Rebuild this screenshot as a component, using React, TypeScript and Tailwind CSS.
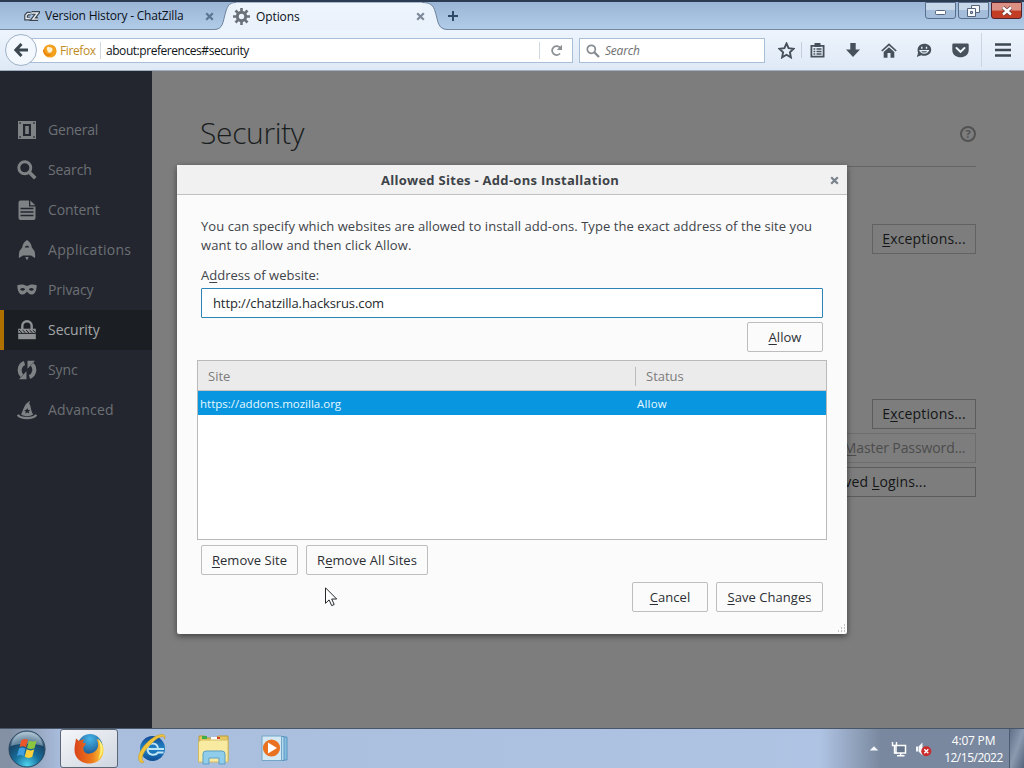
import { type ReactNode } from "react";
import clsx from "clsx";

interface CategoryProps {
  label: string;
  icon: ReactNode;
  selected?: boolean;
  textClass: string;
}

function Category({ label, icon, selected, textClass }: CategoryProps) {
  return (
    <li
      className={clsx(
        "flex h-10 items-center border-l-4 pl-[13px]",
        selected
          ? "border-[#b07000] bg-[#1b1f24] text-[#a3a6a8]"
          : "border-transparent text-[#6c7074]",
      )}
    >
      <svg width="20" height="20" viewBox="0 0 20 20" className={selected ? "text-[#8f9193]" : "text-[#7f8284]"}>
        {icon}
      </svg>
      <span className={clsx("ml-[11px] whitespace-nowrap text-[14px] leading-5", textClass)}>{label}</span>
    </li>
  );
}

interface ButtonProps {
  children: ReactNode;
  className?: string;
}

function DialogButton({ children, className }: ButtonProps) {
  return (
    <button
      type="button"
      className={clsx(
        "h-[30px] shrink-0 whitespace-nowrap rounded-[2px] border border-[#bdbdbd] bg-[#fbfbfb] text-[13px] leading-5 tracking-[0.05px] text-[#2b2f33]",
        className,
      )}
    >
      {children}
    </button>
  );
}

function PageButton({ children, className }: ButtonProps) {
  return (
    <button
      type="button"
      className={clsx(
        "flex h-[30px] shrink-0 items-center justify-center whitespace-nowrap border text-[14px] leading-5",
        className,
      )}
    >
      {children}
    </button>
  );
}

/** Access key underline. */
function Key({ children }: { children: string }) {
  return <span className="underline decoration-1 underline-offset-2">{children}</span>;
}

function CloseGlyph({ className }: { className?: string }) {
  return (
    <svg width="9" height="9" viewBox="0 0 9 9" className={clsx("z-10 shrink-0", className)}>
      <path d="M1.2 1.2 7.8 7.8M7.8 1.2 1.2 7.8" stroke="currentColor" strokeWidth="2.2" />
    </svg>
  );
}

const categories: CategoryProps[] = [
  {
    label: "General",
    textClass: "tracking-[-0.2px]",
    icon: (
      <>
        <path
          fillRule="evenodd"
          fill="currentColor"
          d="M1 1h18v18H1zM6 4v12h8V4zM2.300 2.300v1.500h1.500V2.300zM16.200 2.300v1.500h1.500V2.300zM2.300 16.200v1.500h1.500v-1.500zM16.200 16.200v1.500h1.500v-1.500z"
        />
        <path fill="currentColor" d="M8.200 6h3.600v8H8.200z" />
      </>
    ),
  },
  {
    label: "Search",
    textClass: "tracking-[-0.1px]",
    icon: (
      <>
        <circle cx="7.800" cy="7.800" r="6" fill="none" stroke="currentColor" strokeWidth="2.900" />
        <path d="m12.300 12.300 6 6" stroke="currentColor" strokeWidth="3.600" />
      </>
    ),
  },
  {
    label: "Content",
    textClass: "tracking-[-0.1px]",
    icon: (
      <>
        <path fill="currentColor" d="M3.500.5H12v6h6.500v11.500q0 2-2 2h-13q-2 0-2-2v-15.500q0-2 2-2zM13.300.5l5 4.800h-5z" />
        <path d="M3.500 8.500h13M3.500 12h13M3.500 15.500h13" stroke="#23262f" strokeWidth="1.300" />
      </>
    ),
  },
  {
    label: "Applications",
    textClass: "tracking-[0.3px]",
    icon: (
      <>
        <path
          fill="currentColor"
          d="M10 0c3 1.700 4.400 4.200 4.800 7.500L17.500 11q1 3.500.5 7l-4-2.500H6L2 18q-.5-3.500.5-7l2.700-3.500C5.600 4.200 7 1.700 10 0z"
        />
        <path d="M8.300 17h3.400L10 20.500z" fill="currentColor" />
        <path d="M7.800 7.500C8 5 12 5 12.200 7.500z" fill="#23262f" />
      </>
    ),
  },
  {
    label: "Privacy",
    textClass: "tracking-[-0.1px]",
    icon: (
      <path
        fillRule="evenodd"
        fill="currentColor"
        d="M.3 5.200C4 3.800 7.500 4.500 10 6c2.500-1.500 6-2.200 9.700-.8-.1 5.800-2 9.300-5.300 9.300-2 0-3.400-1.500-4.400-3-1 1.500-2.400 3-4.400 3-3.300 0-5.200-3.500-5.300-9.300zM3 9.300q2.700 3 5.200 0Q5.500 6.800 3 9.300zM11.800 9.300q2.500 3 5.200 0-2.700-2.500-5.200 0z"
      />
    ),
  },
  {
    label: "Security",
    selected: true,
    textClass: "tracking-[-0.05px]",
    icon: (
      <>
        <path d="M5.300 9V6a4.700 4.700 0 0 1 9.400 0v3" fill="none" stroke="currentColor" strokeWidth="2.400" />
        <path d="M1.200 8.700h17.600v10.500H1.200z" fill="currentColor" />
        <path d="m2 10 3 2.800M5.500 10l3 2.800M9 10l3 2.800M12.500 10l3 2.800M15.700 10l3 2.800M1.200 13.400h17.600" stroke="#1b1f24" strokeWidth="1" />
      </>
    ),
  },
  {
    label: "Sync",
    textClass: "tracking-[-0.1px]",
    icon: (
      <>
        <path d="M7.500 3C2.500 4.500 1 12 5 15.800M12.500 17c5-1.500 6.500-9 2.500-12.800" fill="none" stroke="currentColor" strokeWidth="4" />
        <path d="M2 19.200h7.500v-8zM18 .8h-7.500v8z" fill="currentColor" />
      </>
    ),
  },
  {
    label: "Advanced",
    textClass: "tracking-[0.25px]",
    icon: (
      <>
        <path fill="currentColor" d="M4 14.500c2-3.500 2.500-8 6-11.500L13 .8l-.8 3c1.600 1.700 1.300 3.700 2 6 .5 1.800 1 3 1.900 4.700-3.500 2-8.500 2-12.100 0z" />
        <path d="M.8 14.800c2.500 4.300 15.900 4.300 18.400 0" stroke="currentColor" strokeWidth="2.400" fill="none" />
        <path d="m10.200 8 1 1.900 2 .2-1.500 1.400.4 2-1.900-1-1.900 1 .4-2-1.500-1.400 2-.2z" fill="#23262f" />
      </>
    ),
  },
];

function TabStrip() {
  return (
    <div className="flex h-[30px] shrink-0 border-t-2 border-[#2b3c52] bg-gradient-to-b from-[#9ab5d5] to-[#b2cde9]">
      <div className="flex min-w-0 flex-1 items-stretch">
        <div className="flex w-[214px] items-center border-b border-[#73879e] pl-[24px] text-[#0b1118]">
          <svg width="17" height="12" viewBox="0 0 17 12">
            <path
              d="M7 3.500H4L2.200 5.500v3.200h4M8 2.800h6.500L9.500 9.300h5.500"
              fill="none"
              stroke="#3d4650"
              strokeWidth="4"
            />
            <path d="M7 3.500H4L2.200 5.500v3.200h4M8 2.800h6.500L9.500 9.300h5.500" fill="none" stroke="#e9eef3" strokeWidth="1.500" />
          </svg>
          <span className="ml-[5px] w-[160px] shrink-0 whitespace-nowrap text-[12px] leading-4 tracking-[-0.2px]">Version History - ChatZilla</span>
          <CloseGlyph className="mt-px text-[#5a7590]" />
        </div>
        <svg width="22" height="28" viewBox="0 0 22 28" className="shrink-0">
          <path d="M0 28c9 0 9-8 11-15S14 0 22 .5V28z" fill="#eaf2fc" />
          <path d="M0 27.500c9 0 9-8 11-15S14 .5 22 .5" fill="none" stroke="#6f849c" />
        </svg>
        <div className="flex w-[186px] items-center border-t border-[#a5b8cf] bg-gradient-to-b from-[#eef5fd] to-[#e9f1fb] text-[#0b1118]">
          <svg width="17" height="17" viewBox="0 0 17 17" className="-ml-[3px]">
            <circle cx="8.500" cy="8.500" r="4.200" fill="none" stroke="#6a7178" strokeWidth="3" />
            <path
              d="M8.500 0v3.500M8.500 13.500V17M0 8.500h3.500M13.500 8.500H17M2.500 2.500 5 5M12 12l2.500 2.500M14.500 2.500 12 5M5 12l-2.500 2.500"
              stroke="#6a7178"
              strokeWidth="2.600"
            />
          </svg>
          <span className="ml-[6px] flex-1 text-[12px] leading-4 tracking-[-0.1px]">Options</span>
          <CloseGlyph className="mr-[-3px] text-[#7d8a99]" />
        </div>
        <svg width="26" height="28" viewBox="0 0 26 28" className="shrink-0">
          <path d="M26 28c-10 0-10-8-12-15S11 0 0 .5V28z" fill="#eaf2fc" />
          <path d="M26 27.500c-10 0-10-8-12-15S11 .5 0 .5" fill="none" stroke="#6f849c" />
        </svg>
        <div className="flex flex-1 items-center border-b border-[#73879e]">
          <svg width="10" height="10" viewBox="0 0 10 10" className="mt-px">
            <path d="M5 0v10M0 5h10" stroke="#2d4a66" strokeWidth="2" />
          </svg>
        </div>
      </div>
      <div className="flex items-start gap-[2px] border-b border-[#73879e] pr-[2px]">
        <div className="flex h-[17px] w-[31px] items-center justify-center rounded-b-[3px] border border-[#58708e] bg-gradient-to-b from-[#c6d7ea] from-50% to-[#a3bddb] to-50%">
          <svg width="11" height="5" viewBox="0 0 11 5" className="mt-1">
            <rect x=".5" y=".5" width="10" height="4" rx="1" fill="#fff" stroke="#56657a" />
          </svg>
        </div>
        <div className="flex h-[17px] w-[31px] items-center justify-center rounded-b-[3px] border border-[#58708e] bg-gradient-to-b from-[#c6d7ea] from-50% to-[#a3bddb] to-50%">
          <svg width="13" height="12" viewBox="0 0 13 12">
            <path d="M4.500.5h8v7h-8z" fill="#f6f9fc" stroke="#56657a" />
            <path d="M.5 3.500h8v8h-8z" fill="#f6f9fc" stroke="#56657a" />
            <path d="M3.500 6.500h2v2h-2z" fill="#9db7d6" stroke="#56657a" />
          </svg>
        </div>
        <div className="flex h-[17px] w-[31px] items-center justify-center rounded-b-[3px] border border-[#54222a] bg-gradient-to-b from-[#dc9084] from-45% to-[#c33d25] to-55%">
          <svg width="12" height="10" viewBox="0 0 12 10">
            <path d="m2 1.500 8 7M10 1.500l-8 7" stroke="#6a3b3b" strokeWidth="4" />
            <path d="m2 1.500 8 7M10 1.500l-8 7" stroke="#fff" strokeWidth="2.400" />
          </svg>
        </div>
      </div>
    </div>
  );
}

function NavBar() {
  return (
    <div className="flex h-[41px] shrink-0 items-center border-b border-[#9fb0c4] bg-gradient-to-b from-[#edf4fd] to-[#dfe9f6]">
      <div className="z-10 ml-[5px] flex size-8 shrink-0 items-center justify-center rounded-full border border-[#9fb1c6] bg-[#f3f8fe]">
        <svg width="14" height="14" viewBox="0 0 14 14">
          <path d="M7.500 1 1.800 7l5.700 6M2 7h12" fill="none" stroke="#3c4750" strokeWidth="3" />
        </svg>
      </div>
      <div className="-ml-2 mt-px flex h-[25px] w-[544px] shrink-0 items-center border border-[#a9bfd8] bg-white pl-[13px]">
        <svg width="14" height="14" viewBox="0 0 14 14">
          <circle cx="7" cy="7" r="6.600" fill="#f2a01e" />
          <path d="M5 2.500c1 1.200 3 .5 4 1.600 1.500 2-.2 4.800-2.400 4.700C5 8.700 4.200 7.500 4.500 6.500c-1.200-1-.8-3 .5-4z" fill="#fff0cf" />
          <path d="M.5 5.500C.5 9.500 4 12 7.500 10.800" fill="none" stroke="#e8820c" strokeWidth="1.500" />
        </svg>
        <span className="ml-[3px] w-10 text-[12px] leading-4 tracking-[-0.4px] text-[#c08a1e]">Firefox</span>
        <span className="h-[17px] w-px bg-[#cfd8e2]" />
        <span className="ml-[5px] flex-1 text-[12px] leading-4 tracking-[-0.45px] text-[#101418]">about:preferences#security</span>
        <span className="h-[17px] w-px bg-[#cfd8e2]" />
        <div className="flex w-8 justify-center">
          <svg width="13" height="13" viewBox="0 0 13 13">
            <path d="M10 9.500a4.500 4.500 0 1 1 .3-5.500" fill="none" stroke="#8b9095" strokeWidth="1.800" />
            <path d="M12 .8V6H6.800z" fill="#8b9095" />
          </svg>
        </div>
      </div>
      <div className="ml-[6px] mt-px flex h-[25px] w-[186px] shrink-0 items-center border border-[#a9bfd8] bg-white pl-[6px]">
        <svg width="14" height="14" viewBox="0 0 14 14">
          <circle cx="5.300" cy="5.300" r="4" fill="none" stroke="#858b91" strokeWidth="1.700" />
          <path d="m8.300 8.300 4.700 4.700" stroke="#858b91" strokeWidth="2.300" />
        </svg>
        <span className="ml-[5px] text-[12px] italic leading-4 tracking-[-0.2px] text-[#6e6e6e]">Search</span>
      </div>
      <svg width="17" height="17" viewBox="0 0 17 17" className="ml-[13px] shrink-0">
        <path d="m8.500 1.500 2.100 4.700 5 .6-3.700 3.500 1 5.100-4.400-2.600-4.400 2.600 1-5.100L1.400 6.800l5-.6z" fill="none" stroke="#46515b" strokeWidth="1.900" />
      </svg>
      <span className="ml-[6px] h-4 w-px bg-[#c3cedb]" />
      <div className="ml-2 flex flex-1 items-center text-[#46515b]">
        <svg width="15" height="15" viewBox="0 0 15 15" className="shrink-0">
          <path d="M1.400 2.900h12.200v10.700H1.400z" fill="none" stroke="currentColor" strokeWidth="1.800" />
          <path d="M4.500 0h6v4h-6z" fill="currentColor" />
          <path d="M3.500 6h1.800M6.500 6h5M3.500 8.500h1.800M6.500 8.500h5M3.500 11h1.800M6.500 11h5" stroke="currentColor" strokeWidth="1.300" />
        </svg>
        <svg width="14" height="15" viewBox="0 0 14 15" className="ml-[21px] shrink-0">
          <path d="M4.300 0h5.400v6.500H14L7 14 0 6.500h4.300z" fill="currentColor" />
        </svg>
        <svg width="16" height="15" viewBox="0 0 16 15" className="ml-[21px] shrink-0">
          <path d="M.8 8 8 1.300 15.200 8" fill="none" stroke="currentColor" strokeWidth="1.700" />
          <path d="M8 4.200 13.300 9v5.800H9.500V10h-3v4.800H2.700V9z" fill="currentColor" />
        </svg>
        <svg width="16" height="15" viewBox="0 0 16 15" className="ml-[19px] shrink-0">
          <path d="M8.200.8c4.200 0 7 2.500 7 5.900s-2.900 6.100-7 6.100c-1 0-2-.1-3-.5L.8 14l1.300-4C.3 4.800 3.500.8 8.200.8z" fill="currentColor" />
          <path d="M5.800 3.800v2M10.500 3.800v2" stroke="#e8f0fa" strokeWidth="1.400" />
          <path d="M3.300 7.600h9.800M4.200 7.600c1.300 3.400 6.700 3.400 8 0" fill="none" stroke="#e8f0fa" strokeWidth="1.100" />
        </svg>
        <svg width="17" height="15" viewBox="0 0 17 15" className="ml-[20px] shrink-0">
          <path d="M1.500.5h14q1.200 0 1.200 1.300V7c0 9.700-16.400 9.700-16.400 0V1.800Q.3.500 1.500.5z" fill="currentColor" />
          <path d="M4.500 5 8.500 8.800 12.500 5" fill="none" stroke="#eef4fc" strokeWidth="2" strokeLinecap="round" />
        </svg>
      </div>
      <span className="h-[34px] w-px bg-[#c9d5e3]" />
      <svg width="16" height="14" viewBox="0 0 16 14" className="ml-[13px] mr-[13px]">
        <path d="M0 1.500h16M0 7h16M0 12.500h16" stroke="#3d4852" strokeWidth="2.600" />
      </svg>
    </div>
  );
}

function PreferencesPage() {
  return (
    <div className="flex min-h-0 flex-1 bg-[#7d7d7d]">
      <ul className="w-[152px] shrink-0 bg-[#23262f] pt-[39px]">
        {categories.map((category) => (
          <Category key={category.label} {...category} />
        ))}
      </ul>
      <main className="flex flex-1 flex-col pl-12 pr-12 pt-[39px] text-[#141617]">
        <div className="flex h-[57px] items-start justify-between border-b border-[#646464]">
          <h1 className="text-[30px] font-light leading-[46px] tracking-[-0.35px] text-[#1a1d20]">Security</h1>
          <span className="mt-4 flex size-[16px] items-center justify-center rounded-full border-2 border-[#525252] text-[11px] font-bold leading-3 text-[#525252]">
            ?
          </span>
        </div>
        <div className="flex flex-col items-end">
          <PageButton className="mt-[57px] w-[104px] border-[#626262]">
            <span className="tracking-[0.15px]"><Key>E</Key>xceptions...</span>
          </PageButton>
          <PageButton className="mt-[145px] w-[104px] border-[#5c5c5c]">
            <span className="tracking-[0.15px]">E<Key>x</Key>ceptions...</span>
          </PageButton>
          <PageButton className="mt-1 w-[191px] border-[#6d6d6d] pr-1 text-[#4c4c4c]">
            <span className="tracking-[-0.1px]">Change <Key>M</Key>aster Password...</span>
          </PageButton>
          <PageButton className="mt-1 w-[191px] border-[#5c5c5c] pr-[6px]">
            <span className="tracking-[0.15px]">Saved <Key>L</Key>ogins...</span>
          </PageButton>
        </div>
      </main>
    </div>
  );
}

function AllowedSitesDialog() {
  return (
    <section
      className="absolute left-[177px] top-[165px] flex h-[469px] w-[670px] flex-col rounded-[2px] bg-[#fbfbfb] text-[#3f444a] shadow-[0_2px_6px_rgba(0,0,0,0.5)]"
      aria-label="Allowed Sites"
    >
      <header className="flex h-[30px] shrink-0 items-center border-b border-[#c1c1c1] bg-[#f1f1f1] pr-2">
        <h2 className="flex-1 pr-[7px] text-center text-[13px] font-bold leading-5 tracking-[0.28px] text-[#3d4348]">
          Allowed Sites - Add-ons Installation
        </h2>
        <CloseGlyph className="mt-0.5 text-[#7a828c]" />
      </header>
      <div className="flex flex-1 flex-col px-6 pt-[22px] text-[13px]">
        <p className="whitespace-nowrap leading-[19px]">
          <span className="tracking-[0.06px]">You can specify which websites are allowed to install add-ons. Type the exact address of the site you</span>
          <br />
          <span className="tracking-[0.09px]">want to allow and then click Allow.</span>
        </p>
        <label className="mt-[11px] leading-[19px]">
          <span>A<Key>d</Key>dress of website:</span>
        </label>
        <div className="mt-[3px] flex h-[30px] w-[622px] items-center rounded-[1px] border border-[#2c84b8] bg-white pl-[11px] text-[#25292d]">
          <span className="mt-px tracking-[-0.11px]">http://chatzilla.hacksrus.com</span>
        </div>
        <DialogButton className="mt-1 w-[76px] self-end">
          <Key>A</Key>llow
        </DialogButton>
        <div className="-mx-1 mt-2 flex h-[180px] w-[630px] flex-col border border-[#b9b9b9] bg-white">
          <div className="flex h-[30px] items-center border-b border-[#c4c4c4] bg-[#ebebeb] pt-px leading-[19px] text-[#7c7c7c]">
            <span className="w-[437px] pl-[10px]">Site</span>
            <span className="border-l border-[#bcbcbc] pl-[10px]">Status</span>
          </div>
          <div className="flex h-6 items-center bg-[#0996e0] pt-px text-[11.5px] text-[#e6f8ff]">
            <span className="w-[439px] pl-[2px]">https://addons.mozilla.org</span>
            <span className="tracking-[0.2px]">Allow</span>
          </div>
        </div>
        <div className="mt-[5px] flex gap-2">
          <DialogButton className="w-[97px]"><Key>R</Key>emove Site</DialogButton>
          <DialogButton className="w-[122px]">R<Key>e</Key>move All Sites</DialogButton>
        </div>
        <div className="mt-[7px] flex justify-end gap-2">
          <DialogButton className="w-[76px]"><Key>C</Key>ancel</DialogButton>
          <DialogButton className="w-[107px]"><Key>S</Key>ave Changes</DialogButton>
        </div>
      </div>
      <svg width="9" height="9" viewBox="0 0 9 9" className="absolute bottom-px right-px">
        <path d="M7 1h1M4 4h1M7 4h1M1 7h1M4 7h1M7 7h1" stroke="#8c8c8c" strokeWidth="1" />
      </svg>
    </section>
  );
}

function Taskbar() {
  return (
    <footer className="flex h-10 shrink-0 items-stretch border-t border-[#48566a] bg-gradient-to-r from-[#8491a5] from-[1%] via-[#a9bddd] via-[6%] to-[#b0c5e5] text-white">
      <div className="flex w-[60px] items-center pl-2">
        <svg width="38" height="38" viewBox="0 0 38 38">
          <defs>
            <radialGradient id="orb" cx=".5" cy=".95" r=".9">
              <stop offset="0" stopColor="#4fd5ef" />
              <stop offset=".4" stopColor="#176f9c" />
              <stop offset=".75" stopColor="#184567" />
              <stop offset="1" stopColor="#8fa9bb" />
            </radialGradient>
          </defs>
          <circle cx="19" cy="19" r="18" fill="url(#orb)" stroke="#29465f" />
          <path d="M3 16C5 6 12 2 19 2s14 4 16 14c-8-3-24-3-32 0z" fill="#d9e8f2" opacity=".4" />
          <path d="M13.500 10q3.500-2 6.500-.3l-2 7.500q-3.500-2-6.500-.2z" fill="#e9562a" />
          <path d="M21 10.500q3.500 2 7.500.3l-2 7.500q-4 1.700-7.500-.3z" fill="#8cc63f" />
          <path d="M11 18.500q3-2 6.500 0l-2 7.500q-3.500-2-6.500 0z" fill="#3f9fe0" />
          <path d="M18.700 19.300q3.500 2 7.500.3l-2 7.500q-4 1.700-7.500-.3z" fill="#fcd03b" />
        </svg>
      </div>
      <div className="flex w-[58px] items-center justify-center rounded-[3px] border border-[#5c6675] bg-gradient-to-br from-[#f4f6f9] to-[#cfd6e0]">
        <svg width="32" height="32" viewBox="0 0 32 32">
          <defs>
            <radialGradient id="globe" cx=".5" cy=".2" r=".8">
              <stop offset="0" stopColor="#45b5e8" />
              <stop offset="1" stopColor="#143f7d" />
            </radialGradient>
            <linearGradient id="fox" x1="0" y1="0" x2="1" y2="0">
              <stop offset="0" stopColor="#d9431a" />
              <stop offset=".6" stopColor="#ee7a1c" />
              <stop offset="1" stopColor="#fbd53c" />
            </linearGradient>
          </defs>
          <circle cx="17" cy="13.500" r="12.500" fill="url(#globe)" />
          <path
            d="M3 5.500 6 8q2.500-2 5.500-1.500-2 1.700-1.700 3.300l3.200.7q-.5 2-2.500 3c-1 5 2.500 8 6.500 7 4-.8 7-3 7.800-6 .8-3 .2-6-1.300-8.500C28.500 8.500 31 13 30.500 18c-.5 8-6.500 12.500-14.500 12.500S1.500 25 1.500 17C1.500 12 2.500 9.500 3 5.500z"
            fill="url(#fox)"
          />
          <path d="M25 5.500c6 5.500 6.500 15 0 21 3-6 3.500-13 0-21z" fill="#fff07a" />
        </svg>
      </div>
      <div className="flex w-[65px] items-center justify-center">
        <svg width="32" height="32" viewBox="0 0 32 32">
          <defs>
            <linearGradient id="ie" x1="0" y1="0" x2="0" y2="1">
              <stop offset="0" stopColor="#124a93" />
              <stop offset=".5" stopColor="#2384c8" />
              <stop offset="1" stopColor="#0e4d92" />
            </linearGradient>
          </defs>
          <circle cx="17.500" cy="15.500" r="12.500" fill="url(#ie)" />
          <path d="M23 16c0-7.500-10.500-7.500-10.500 0 0 6.500 7.500 7 10.500 3.500h5.500M12.500 16H29" fill="none" stroke="#bfe6f7" strokeWidth="2" />
          <path d="M7 30C-4 26 14 2 27 1.500c3 0 3.500 2 2.500 4.500 0-4.500-6-2.500-12 3.500C9 17 4 26.500 9 29z" fill="#f1c63d" stroke="#c49b24" strokeWidth=".6" />
        </svg>
      </div>
      <div className="flex w-[60px] items-center justify-center pl-0.5">
        <svg width="34" height="32" viewBox="0 0 34 32">
          <path d="M2 3h6l2 2h9l2-2h10v25H2z" fill="#e6c861" stroke="#b99a3f" />
          <path d="M5 3h5v3H5z" fill="#3fae49" />
          <path d="M14 4h9v3h-9z" fill="#fff" />
          <path d="M20 4h3v2h-3z" fill="#d8432f" />
          <path d="M1.500 9 4 7h27v22H1.500z" fill="#f8eaa0" stroke="#d4bb62" />
          <path d="M6 31V21q0-3 3-3h16q3 0 3 3v10h-6v-6H12v6z" fill="#8fcdea" stroke="#5c9fc8" />
        </svg>
      </div>
      <div className="flex flex-1 items-center pl-[18px]">
        <svg width="28" height="27" viewBox="0 0 28 27">
          <path d="M8 2h18v23H8z" fill="#86bfe2" stroke="#5a95bf" />
          <path d="M4 1.500h19v24H4z" fill="#b6dbf0" stroke="#5a95bf" />
          <path d="M1 1h19.500v24.500H1z" fill="#d4e9f4" stroke="#72a5c6" />
          <circle cx="10.500" cy="13" r="8.600" fill="#ea7120" />
          <path d="m7 7.500 9 5.500-9 5.500z" fill="#fff" />
        </svg>
      </div>
      <div className="flex w-[204px] items-center bg-gradient-to-r from-transparent to-[#79889e] to-[30%]">
        <svg width="10" height="5" viewBox="0 0 10 5" className="ml-[49px] shrink-0">
          <path d="m5 .3 4.300 4.200H.7z" fill="#f3f6fa" />
        </svg>
        <svg width="16" height="16" viewBox="0 0 16 16" className="ml-[12px] shrink-0">
          <path d="M5 4.500h9.500v7.500H5zM6 14.800h7.500M9.700 12v2.500" fill="#65758b" stroke="#fff" strokeWidth="1.500" />
          <path d="M1.500 1v3.500h4V1M3.500 4.500V12H6" fill="none" stroke="#fff" strokeWidth="1.400" />
        </svg>
        <svg width="17" height="16" viewBox="0 0 17 16" className="ml-[8px] shrink-0">
          <path d="M1 5.500h2v5H1zM3.500 5.500 7.500 1.500v13l-4-4z" fill="#f4f6f9" />
          <circle cx="11.300" cy="10.300" r="5" fill="#cc2b2b" />
          <path d="m9.300 8.300 4 4M13.300 8.300l-4 4" stroke="#fff" strokeWidth="1.400" />
        </svg>
        <div className="flex-1 pl-[6px] pt-px text-center text-[12px] leading-[17px]">
          <div className="tracking-[-0.2px]">4:07 PM</div>
          <div className="tracking-[-0.5px]">12/15/2022</div>
        </div>
        <div className="h-full w-[15px] border-l border-[#4e5b6e] bg-gradient-to-br from-[#607088] via-[#8c9ab0] to-[#56657b]" />
      </div>
    </footer>
  );
}

export default function App() {
  return (
    <div className="relative flex h-[768px] w-[1024px] flex-col overflow-hidden font-['Open_Sans','Noto_Sans',sans-serif]">
      <TabStrip />
      <NavBar />
      <PreferencesPage />
      <Taskbar />
      <AllowedSitesDialog />
      <svg width="13" height="20" viewBox="0 0 13 20" className="absolute left-[325px] top-[587px]">
        <path d="M.5.800v15.500l3.600-3.400 2.600 5.700 2.500-1.100-2.500-5.500h5z" fill="#fff" stroke="#24272b" />
      </svg>
    </div>
  );
}
